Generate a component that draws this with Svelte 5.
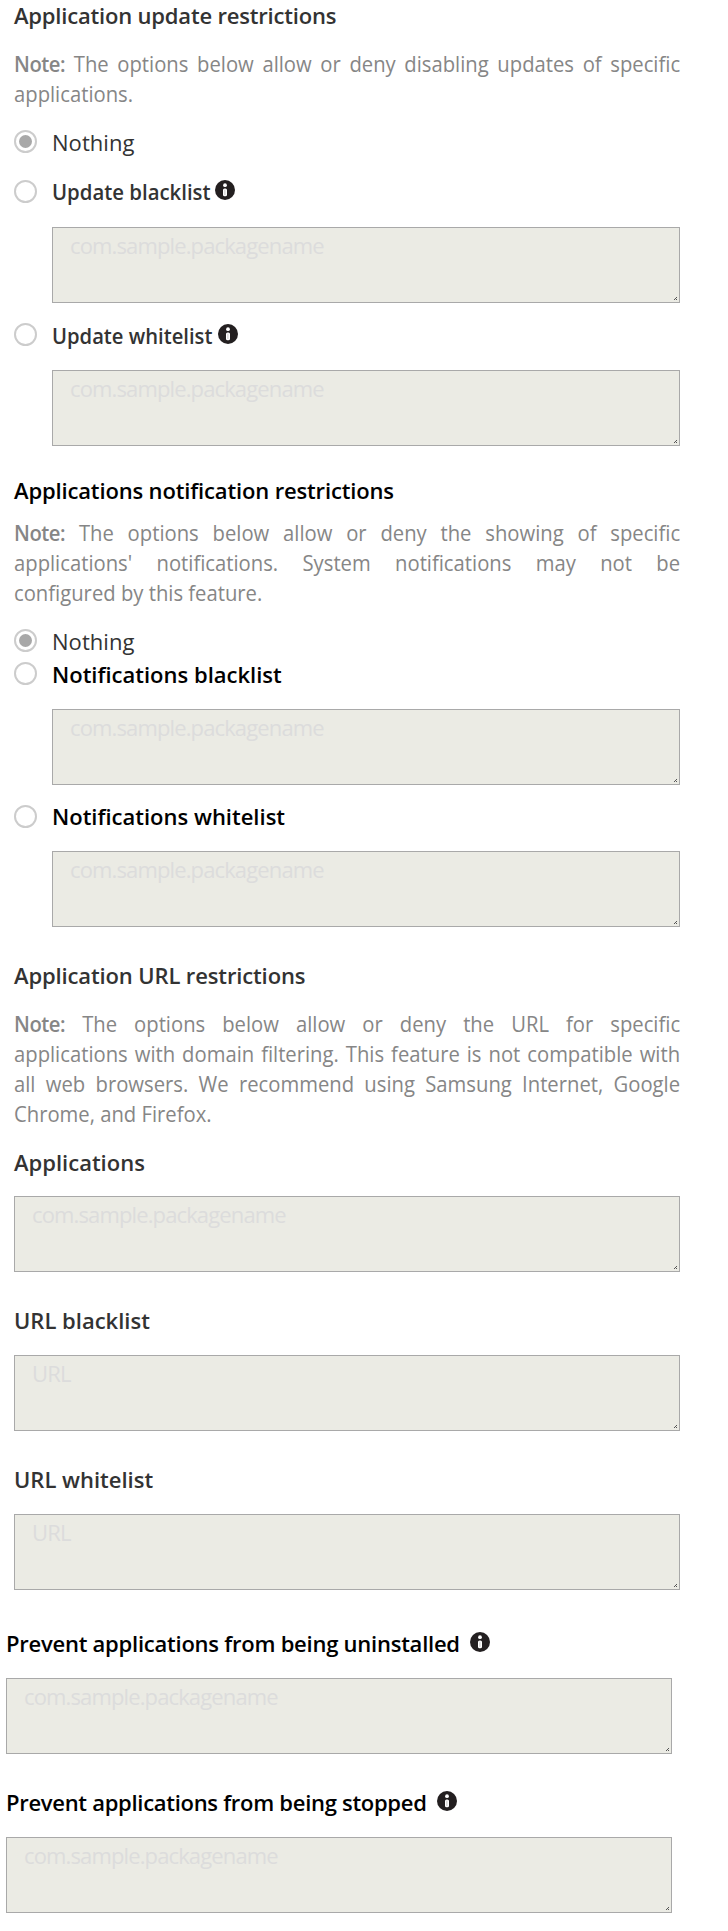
<script>
  const pkg = 'com.sample.packagename';
</script>

{#snippet info()}
  <svg class="info" viewBox="0 0 20 20" width="20" height="20" aria-hidden="true">
    <circle cx="10" cy="10" r="10" fill="#231f20" />
    <circle cx="10" cy="5.2" r="1.9" fill="#fff" />
    <rect x="8" y="8.5" width="4" height="7.8" rx="1.6" fill="#fff" />
    <rect x="9.4" y="9.6" width="1" height="5.4" fill="#231f20" opacity="0.25" />
  </svg>
{/snippet}

{#snippet choice(label, checked, kind, hasInfo)}
  <label class="choice {kind}">
    <span class="radio" class:checked></span>
    <span class="text">{label}</span>
    {#if hasInfo}{@render info()}{/if}
  </label>
{/snippet}

{#snippet box(placeholder)}
  <div class="box">
    <textarea {placeholder}></textarea>
    <svg class="grip" viewBox="0 0 3 3" width="3" height="3" shape-rendering="crispEdges" aria-hidden="true">
      <path d="M2 0h1v1h-1zM1 1h1v1h-1zM0 2h1v1h-1zM2 2h1v1h-1z" fill="#555" />
    </svg>
  </div>
{/snippet}

<main>
  <section class="update">
    <h2>Application update restrictions</h2>
    <p class="note"><b>Note:</b> The options below allow or deny disabling updates of specific applications.</p>
    {@render choice('Nothing', true, 'plain', false)}
    <div class="option">
      {@render choice('Update blacklist', false, 'strong', true)}
      {@render box(pkg)}
    </div>
    <div class="option">
      {@render choice('Update whitelist', false, 'strong', true)}
      {@render box(pkg)}
    </div>
  </section>

  <section class="notify">
    <h2>Applications notification restrictions</h2>
    <p class="note"><b>Note:</b> The options below allow or deny the showing of specific applications' notifications. System notifications may not be configured&nbsp;by&nbsp;this feature.</p>
    {@render choice('Nothing', true, 'plain', false)}
    <div class="option">
      {@render choice('Notifications blacklist', false, 'strong', false)}
      {@render box(pkg)}
    </div>
    <div class="option">
      {@render choice('Notifications whitelist', false, 'strong', false)}
      {@render box(pkg)}
    </div>
  </section>

  <section class="urls">
    <h2>Application URL restrictions</h2>
    <p class="note"><b>Note:</b> The options below allow or deny the URL for specific applications&nbsp;with domain filtering. This feature is not compatible with all&nbsp;web browsers. We recommend using Samsung Internet, Google Chrome,&nbsp;and Firefox.</p>
    <div class="field"><h3>Applications</h3>{@render box(pkg)}</div>
    <div class="field"><h3>URL blacklist</h3>{@render box('URL')}</div>
    <div class="field"><h3>URL whitelist</h3>{@render box('URL')}</div>
  </section>

  <section class="prevent">
    <div class="field">
      <h3><span>Prevent applications from being uninstalled</span>{@render info()}</h3>
      {@render box(pkg)}
    </div>
    <div class="field">
      <h3><span>Prevent applications from being stopped</span>{@render info()}</h3>
      {@render box(pkg)}
    </div>
  </section>
</main>

<style>
  :global(body) { background: #fff; }
  main {
    padding: 1px 48px 18px 14px;
    font: 400 22px/30px "Open Sans", "Noto Sans", sans-serif;
    color: #333;
  }
  h2, h3, p { margin: 0; font-size: 22px; line-height: 30px; white-space: nowrap; }
  h2, h3 { font-weight: 600; transform: translateY(-1px); }
  h2 { letter-spacing: -0.19px; }
  .note {
    width: 724px;
    margin-top: 18px;
    transform: translateY(-1px) scaleX(0.92);
    transform-origin: 0 0;
    white-space: normal;
    text-align: justify;
    color: #868686;
  }
  .note b { font-weight: 600; letter-spacing: -0.5px; }
  .choice { display: flex; height: 30px; align-items: flex-start; }
  .choice .text { margin-left: 15px; white-space: nowrap; transform: translateY(-1px); transform-origin: 0 0; }
  .plain { margin-top: 19px; }
  .plain .text { letter-spacing: 0.05px; }
  .strong { font-weight: 600; }
  .update .strong .text { margin-right: -13px; transform: translateY(-1px) scaleX(0.925); }
  .update .option + .option .text { margin-right: -14px; transform: translateY(-1px) scaleX(0.918); }
  .radio {
    box-sizing: border-box;
    width: 23px;
    height: 23px;
    margin-top: 2px;
    flex: none;
    border: 2px solid #ccc;
    border-radius: 50%;
    display: grid;
    place-items: center;
  }
  .checked::after { content: ""; width: 13px; height: 13px; border-radius: 50%; background: #a8a8a8; }
  .update .plain + .option .radio,
  .notify .option + .option .radio { margin-top: 3px; }
  .info { display: block; flex: none; margin: 3px 0 0 5px; }
  .box { position: relative; height: 76px; }
  textarea {
    display: block;
    box-sizing: border-box;
    width: 100%;
    height: 100%;
    margin: 0;
    padding: 2px 17px;
    border: 1px solid #a9a9a9;
    border-radius: 0;
    background: #ebebe4;
    font: inherit;
    letter-spacing: -0.87px;
    overflow: auto;
    resize: none;
  }
  textarea::placeholder { color: #dcdcdc; opacity: 1; }
  .grip { position: absolute; right: 3px; bottom: 3px; display: block; }
  .option .box { margin: 19px 0 0 38px; }
  .option { margin-top: 18px; }
  .update .plain + .option { margin-top: 19px; }
  .update .plain + .option .box { margin-top: 20px; }
  .notify { margin-top: 30px; color: #000; }
  .notify h2 { letter-spacing: -0.15px; }
  .notify .note { margin-top: 12px; }
  .notify .plain { color: #333; }
  .notify .plain + .option { margin-top: 3px; }
  .notify .option + .option { margin-top: 17px; }
  .urls { margin-top: 34px; }
  .urls h2 { letter-spacing: -0.13px; }
  .field h3 { display: flex; margin-bottom: 19px; }
  .field + .field { margin-top: 34px; }
  .note + .field { margin-top: 19px; }
  .note + .field h3 { margin-bottom: 18px; }
  .prevent { margin: 39px 8px 0 -8px; color: #000; }
  .prevent h3 { letter-spacing: -0.24px; }
  .prevent .info { margin: 4px 0 0 10px; }
  .prevent .field + .field h3 { letter-spacing: -0.29px; }
</style>
